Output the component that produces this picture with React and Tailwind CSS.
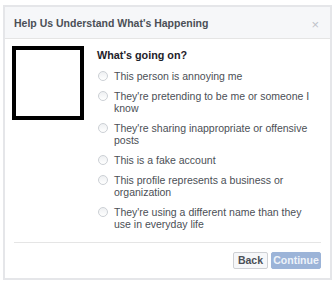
import React from 'react'

const options = [
  "This person is annoying me",
  "They're pretending to be me or someone I know",
  "They're sharing inappropriate or offensive posts",
  "This is a fake account",
  "This profile represents a business or organization",
  "They're using a different name than they use in everyday life",
]

const Radio = () => (
  <span className="mt-[1px] w-[10px] h-[10px] shrink-0 rounded-full border border-[#ccd0d5] bg-gradient-to-b from-[#eef0f2] to-[#ffffff]" />
)

const App = () => {
  return (
    <div className="w-[336px] h-[288px] bg-white pt-[5px] pl-[3px] font-['Liberation_Sans',Arial,sans-serif]">
      <div className="w-[329px] h-[275px] border-2 border-[#e5e6e9] bg-white flex flex-col">
        {/* Header */}
        <div className="h-[32px] shrink-0 bg-[#f6f7f9] border-b border-[#e5e5e5] flex items-center justify-between pt-[3px] pl-[9px] pr-[11px]">
          <span className="text-[10.5px] font-bold text-[#4b4f56]">Help Us Understand What's Happening</span>
          <span className="text-[13px] text-[#bec2c9] leading-none">×</span>
        </div>

        {/* Body */}
        <div className="flex pt-[7px] pl-[7px] pr-[10px] flex-1">
          <div className="w-[72px] h-[74px] shrink-0 border-[4px] border-black bg-white" />
          <div className="ml-[13px] flex flex-col">
            <div className="text-[10.8px] leading-[12px] font-bold text-[#1d2129] mt-[3px] mb-[9px]">What's going on?</div>
            <div className="flex flex-col gap-[8px]">
              {options.map((opt) => (
                <div key={opt} className="flex items-start gap-[6px] pl-[1px]">
                  <Radio />
                  <span className="text-[10.5px] leading-[12px] text-[#4b4f56] w-[202px]">{opt}</span>
                </div>
              ))}
            </div>
          </div>
        </div>

        {/* Footer */}
        <div className="mx-[9px] border-t border-[#e5e5e5] pt-[9px] pb-[9px] flex justify-end gap-[3px]">
          <button className="h-[17px] w-[35px] text-[10.5px] font-bold text-[#4b4f56] bg-[#f6f7f9] border border-[#ced0d4] rounded-[2px] leading-none">Back</button>
          <button className="h-[17px] w-[50px] text-[10.5px] font-bold text-[#eef3fa] bg-[#9cb4d8] border border-[#9cb4d8] rounded-[2px] leading-none">Continue</button>
        </div>
      </div>
    </div>
  )
}

export default App
